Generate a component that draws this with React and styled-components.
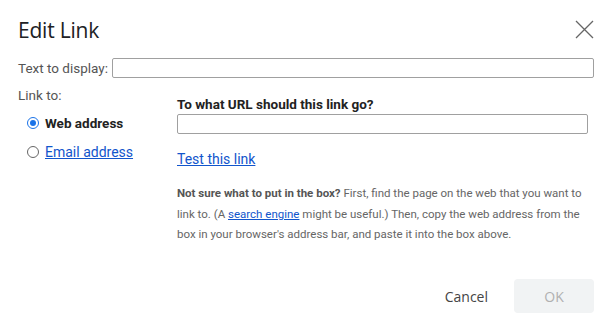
import React from 'react';
import styled, { createGlobalStyle } from 'styled-components';

const Global = createGlobalStyle`
  body {
    margin: 0;
    background: #fff;
    font-family: Roboto, "Liberation Sans", Arial, sans-serif;
  }
`;

const Dialog = styled.div`
  width: 610px;
  height: 329px;
  box-sizing: border-box;
  padding: 14px 16px 0 18px;
  display: flex;
  flex-direction: column;
`;

const Header = styled.div`
  display: flex;
  align-items: center;
  justify-content: space-between;
  height: 32px;
`;

const Title = styled.h1`
  margin: 0;
  font-family: "Open Sans", Roboto, sans-serif;
  font-weight: 400;
  font-size: 21px;
  color: #202124;
  letter-spacing: -0.2px;
`;

const Close = styled.button`
  border: 0;
  background: none;
  padding: 0;
  width: 20px;
  height: 20px;
  cursor: pointer;
`;

const Row = styled.div`
  display: flex;
  align-items: center;
  gap: 4px;
  margin-top: 12px;
`;

const Label = styled.label`
  font-size: 13.5px;
  color: #555;
`;

const TextBox = styled.input`
  flex: ${({ grow }) => (grow ? 1 : 'none')};
  box-sizing: border-box;
  height: ${({ tall }) => (tall ? 20 : 19)}px;
  width: ${({ width }) => width || 'auto'};
  border: 1px solid #a0a0a0;
  border-radius: 2px;
  outline: none;
`;

const LinkSection = styled.div`
  display: flex;
  margin-top: 9px;
`;

const LeftCol = styled.div`
  width: 159px;
  display: flex;
  flex-direction: column;
`;

const RadioList = styled.div`
  display: flex;
  flex-direction: column;
  gap: 13px;
  margin-top: 12px;
  padding-left: 9px;
`;

const RadioRow = styled.label`
  display: flex;
  align-items: center;
  gap: 6px;
  font-size: 13.5px;
  color: #222;
  font-weight: ${({ selected }) => (selected ? 700 : 400)};
`;

const Radio = styled.span`
  width: 12px;
  height: 12px;
  box-sizing: border-box;
  border-radius: 50%;
  border: 1px solid ${({ checked }) => (checked ? '#1a73e8' : '#666')};
  display: flex;
  align-items: center;
  justify-content: center;
  &::after {
    content: '';
    width: 6px;
    height: 6px;
    border-radius: 50%;
    background: ${({ checked }) => (checked ? '#1a73e8' : 'transparent')};
  }
`;

const A = styled.a`
  color: #1155cc;
  text-decoration: underline;
  font-size: ${({ size }) => size || 14}px;
`;

const RightCol = styled.div`
  flex: 1;
  display: flex;
  flex-direction: column;
  padding-top: 9px;
`;

const Question = styled.div`
  font-size: 13.5px;
  font-weight: 700;
  color: #222;
  margin-bottom: 2px;
`;

const TestLink = styled.div`
  margin-top: 15px;
`;

const Help = styled.p`
  margin: 15px 0 0;
  font-size: 11.5px;
  line-height: 20.5px;
  color: #666;
  width: 412px;
  b {
    color: #555;
  }
`;

const Footer = styled.div`
  margin-top: auto;
  margin-bottom: 16px;
  display: flex;
  justify-content: flex-end;
  align-items: center;
  gap: 4px;
`;

const Button = styled.button`
  font-family: "Open Sans", Roboto, sans-serif;
  font-size: 14px;
  height: 34px;
  padding: 0 ${({ primary }) => (primary ? 0 : 22)}px;
  min-width: ${({ primary }) => (primary ? 80 : 0)}px;
  border: 0;
  border-radius: 4px;
  background: ${({ primary }) => (primary ? '#f1f3f4' : 'transparent')};
  color: ${({ primary }) => (primary ? '#b0b0b0' : '#444')};
`;

export default function App() {
  return (
    <>
      <Global />
      <Dialog>
        <Header>
          <Title>Edit Link</Title>
          <Close aria-label="Close">
            <svg width="19" height="19" viewBox="0 0 19 19">
              <path d="M1 1L18 18M18 1L1 18" stroke="#666" strokeWidth="1.3" fill="none" />
            </svg>
          </Close>
        </Header>
        <Row>
          <Label>Text to display:</Label>
          <TextBox grow tall />
        </Row>
        <LinkSection>
          <LeftCol>
            <Label>Link to:</Label>
            <RadioList>
              <RadioRow selected>
                <Radio checked />
                Web address
              </RadioRow>
              <RadioRow>
                <Radio />
                <A href="#">Email address</A>
              </RadioRow>
            </RadioList>
          </LeftCol>
          <RightCol>
            <Question>To what URL should this link go?</Question>
            <TextBox width="411px" tall />
            <TestLink>
              <A href="#">Test this link</A>
            </TestLink>
            <Help>
              <b>Not sure what to put in the box?</b> First, find the page on the web that you want to
              link to. (A <A href="#" size={11.5}>search engine</A> might be useful.) Then, copy the web address from the
              box in your browser's address bar, and paste it into the box above.
            </Help>
          </RightCol>
        </LinkSection>
        <Footer>
          <Button>Cancel</Button>
          <Button primary>OK</Button>
        </Footer>
      </Dialog>
    </>
  );
}
